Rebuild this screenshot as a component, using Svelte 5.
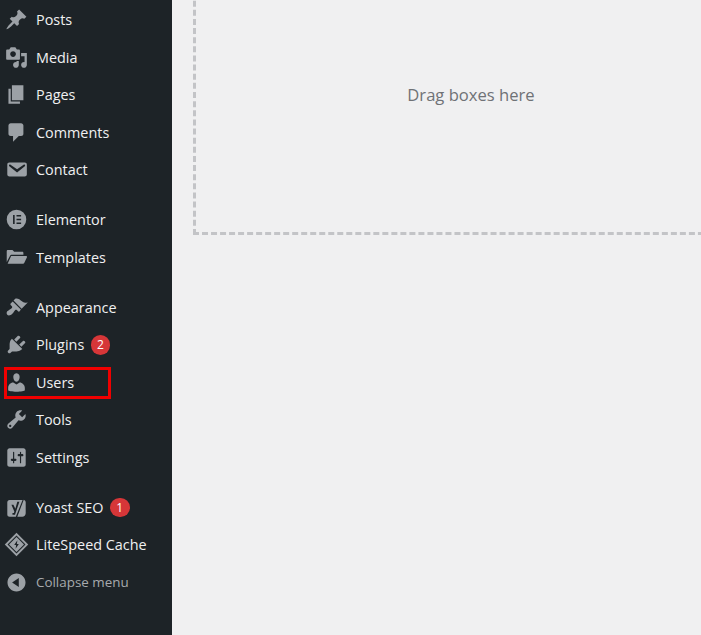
<script>
  const icons = {
    posts: 'M10.44 3.02l1.82-1.82 6.36 6.35-1.83 1.82c-1.05-.68-2.48-.57-3.41.36l-.75.75c-.92.93-1.04 2.35-.35 3.41l-1.83 1.82-2.41-2.41-2.8 2.79c-.42.42-3.38 2.71-3.8 2.29s1.86-3.39 2.28-3.81l2.79-2.79L4.1 9.36l1.83-1.82c1.05.69 2.48.57 3.4-.36l.75-.75c.93-.92 1.05-2.35.36-3.41z',
    media: 'M13 11V4c0-.55-.45-1-1-1h-1.67L9 1H5L3.67 3H2c-.55 0-1 .45-1 1v7c0 .55.45 1 1 1h10c.55 0 1-.45 1-1zM7 4.500c1.380 0 2.500 1.120 2.500 2.500S8.380 9.500 7 9.500 4.500 8.380 4.500 7 5.620 4.500 7 4.500zM14 6h5v10.500c0 1.380-1.120 2.500-2.500 2.500S14 17.880 14 16.500s1.120-2.500 2.500-2.500c.17 0 .34.02.5.05V9h-3V6zm-4 8.050V13h2v3.500c0 1.380-1.120 2.500-2.500 2.500S7 17.880 7 16.500 8.120 14 9.500 14c.17 0 .34.02.5.05z',
    pages: 'M6 15V2h10v13H6zm-1 1h8v2H3V5h2v11z',
    comments: 'M5 2h9c1.100 0 2 .9 2 2v7c0 1.100-.9 2-2 2h-2l-5 5v-5H5c-1.100 0-2-.9-2-2V4c0-1.100.9-2 2-2z',
    email: 'M3.870 4h13.250C18.370 4 19 4.590 19 5.790v8.420c0 1.190-.63 1.790-1.880 1.790H3.870c-1.250 0-1.880-.6-1.880-1.790V5.790c0-1.200.63-1.790 1.880-1.790zm6.620 8.600l6.740-5.530c.24-.2.43-.66.13-1.070-.29-.41-.82-.42-1.170-.17l-5.700 3.860L4.800 5.830c-.35-.25-.88-.24-1.170.17-.3.41-.11.87.13 1.070z',
    elementor: 'M10 1.500a8.500 8.500 0 1 0 0 17 8.500 8.500 0 0 0 0-17zM7 6h1.400v8H7V6zm3 0h4v1.400h-4V6zm0 3.300h4v1.400h-4V9.300zm0 3.300h4V14h-4v-1.400z',
    folder: 'M1.500 4.500c0-.6.4-1 1-1h4l1.500 1.500H15c.6 0 1 .4 1 1V7.500H6c-.8 0-1.400.4-1.700 1.100L1.500 14V4.500zM5.300 8.800H18.500c.5 0 .8.5.6 1l-2.400 5c-.2.4-.5.7-1 .7H2.300l3-6.700z',
    appearance: 'M14.480 11.060L7.410 3.990l1.500-1.500c.5-.56 2.300-.47 3.510.32 1.210.8 1.430 1.280 2.910 2.100 1.180.64 2.450 1.260 4.450.85zm-.71.71L6.700 4.700 4.930 6.470c-.39.39-.39 1.020 0 1.410l1.060 1.060c.39.39.39 1.030 0 1.420-.6.6-1.430 1.110-2.210 1.690-.35.26-.7.53-1.010.84C1.430 13.230.91 15.240 1.950 16.300c1.050 1.050 3.070.53 4.410-.82.3-.3.57-.65.83-1 .58-.78 1.090-1.610 1.690-2.210.39-.39 1.020-.39 1.410 0l1.060 1.060c.39.39 1.020.39 1.410 0z',
    plugins: 'M13.110 4.360L9.870 7.600 8 5.730l3.240-3.240c.35-.34 1.050-.2 1.560.32.52.51.66 1.210.31 1.550zm-8 1.770l.91-1.120 9.010 9.010-1.190.84c-.71.71-2.630 1.160-3.820 1.160H6.140L4.900 17.260c-.59.59-1.540.59-2.120 0-.59-.58-.59-1.530 0-2.120l1.240-1.240v-3.880c0-1.130.4-3.190 1.090-3.890zm7.260 3.970l3.240-3.240c.34-.35 1.040-.21 1.550.31.52.51.66 1.210.31 1.550l-3.240 3.250z',
    users: 'M10 9.250c-2.270 0-2.730-3.440-2.730-3.440C7 4.020 7.820 2 9.970 2c2.160 0 2.980 2.020 2.710 3.810 0 0-.41 3.440-2.680 3.440zm0 2.570L12.720 10c2.390 0 4.520 2.330 4.520 4.530v2.490s-3.650 1.130-7.240 1.130c-3.650 0-7.240-1.130-7.240-1.130v-2.490c0-2.250 1.940-4.480 4.470-4.480z',
    tools: 'M16.680 9.770c-1.340 1.340-3.300 1.670-4.950.99l-5.410 6.520c-.99.99-2.590.99-3.580 0s-.99-2.590 0-3.570l6.520-5.420c-.68-1.650-.35-3.610.99-4.950 1.280-1.280 3.120-1.620 4.720-1.060l-2.890 2.890 2.820 2.820 2.860-2.870c.53 1.580.18 3.390-1.080 4.650zM3.810 16.210c.4.39 1.040.39 1.430 0 .4-.4.4-1.040 0-1.430-.39-.4-1.030-.4-1.430 0-.39.39-.39 1.030 0 1.430z',
    settings: 'M18 16V4c0-1.100-.9-2-2-2H4c-1.100 0-2 .9-2 2v12c0 1.100.9 2 2 2h12c1.100 0 2-.9 2-2zM8 11h1c.55 0 1 .45 1 1s-.45 1-1 1H8v1.500c0 .28-.22.5-.5.5s-.5-.22-.5-.5V13H6c-.55 0-1-.45-1-1s.45-1 1-1h1V5.500c0-.28.22-.5.5-.5s.5.22.5.5V11zm5-2h-1c-.55 0-1-.45-1-1s.45-1 1-1h1V5.500c0-.28.22-.5.5-.5s.5.22.5.5V7h1c.55 0 1 .45 1 1s-.45 1-1 1h-1v5.500c0 .28-.22.5-.5.5s-.5-.22-.5-.5V9z',
    yoast: 'M2 5.500C2 4.600 2.800 3.500 4 3.500h11.300L9.400 18H4c-1.100 0-2-.9-2-2V5.500zM16.300 3.300C17.300 3.700 18 4.500 18 5.500V15c0 1.700-1.300 3-3 3h-4.300l5.600-14.700zM5.600 7.500l2.500 6-.3 1.200H6.500v1.500h2.200l3.800-11.200h-1.800L9 11 7.300 7.500H5.600z',
    litespeed: 'M10 -.2L20.200 10 10 20.200-.2 10 10-.2zm0 2.400L2.200 10l7.800 7.800 7.800-7.800L10 2.200zm0 1.300l6.500 6.500-6.500 6.500L3.500 10 10 3.500zm.8 2.700L8 10.500h1.700l-.5 3.300 2.800-4.300h-1.700l.5-3.300z',
    collapse: 'M10 2.160c4.330 0 7.840 3.510 7.840 7.840s-3.510 7.840-7.840 7.840S2.160 14.330 2.160 10 5.710 2.160 10 2.160zm2 11.720V6.120L6.180 9.970z'
  };
  const groups = [
    [['Posts','posts'],['Media','media'],['Pages','pages'],['Comments','comments'],['Contact','email']],
    [['Elementor','elementor'],['Templates','folder']],
    [['Appearance','appearance'],['Plugins','plugins',2],['Users','users'],['Tools','tools'],['Settings','settings']],
    [['Yoast SEO','yoast',1],['LiteSpeed Cache','litespeed']]
  ];
</script>

<div class="page">
  <nav class="sidebar">
    {#each groups as group}
      <ul class="group">
        {#each group as [label, icon, badge]}
          <li class="item" class:marked={label === 'Users'}>
            <svg viewBox="0 0 20 20" class="icon" aria-hidden="true"><path fill-rule="evenodd" d={icons[icon]} /></svg>
            <span>{label}</span>
            {#if badge}<b class="badge">{badge}</b>{/if}
          </li>
        {/each}
      </ul>
    {/each}
    <div class="item collapse">
      <svg viewBox="0 0 20 20" class="icon" aria-hidden="true"><path fill-rule="evenodd" d={icons.collapse} /></svg>
      <span>Collapse menu</span>
    </div>
  </nav>
  <main class="content">
    <div class="dropzone">Drag boxes here</div>
  </main>
</div>

<style>
  :global(body) { margin: 0; background: #f0f0f1; overflow: hidden; }
  .page { display: flex; width: 701px; height: 635px; overflow: hidden; font-family: "Open Sans", "Noto Sans", sans-serif; }
  .sidebar { flex: 0 0 172px; background: #1d2327; padding-top: 1px; box-sizing: border-box; }
  .group { list-style: none; margin: 0 0 12.5px; padding: 0; }
  .item { position: relative; display: flex; align-items: center; height: 37.5px; padding-left: 5px; color: #f0f0f1; font-size: 14.4px; }
  .icon { flex: 0 0 23px; width: 23px; height: 23px; margin-right: 8px; fill: #9ca1a6; overflow: visible; }
  .badge { display: flex; align-items: center; justify-content: center; width: 19.5px; height: 19.5px; margin-left: 6.5px; border-radius: 50%; background: #d63638; color: #fff; font-size: 12px; font-weight: 400; }
  .marked::after { content: ""; position: absolute; left: 4px; top: 3px; width: 107px; height: 32px; box-sizing: border-box; border: 3px solid #f00000; }
  .collapse { margin-top: -12.5px; color: #a7aaad; font-size: 13.4px; }
  .content { flex: 1; min-width: 0; padding-left: 21px; }
  .dropzone { display: flex; align-items: center; justify-content: center; width: 556px; height: 280px; margin-top: -45px; padding-bottom: 2px; box-sizing: border-box; border: 3px dashed #c3c4c7; color: #6f7276; font-size: 16.6px; }
</style>
